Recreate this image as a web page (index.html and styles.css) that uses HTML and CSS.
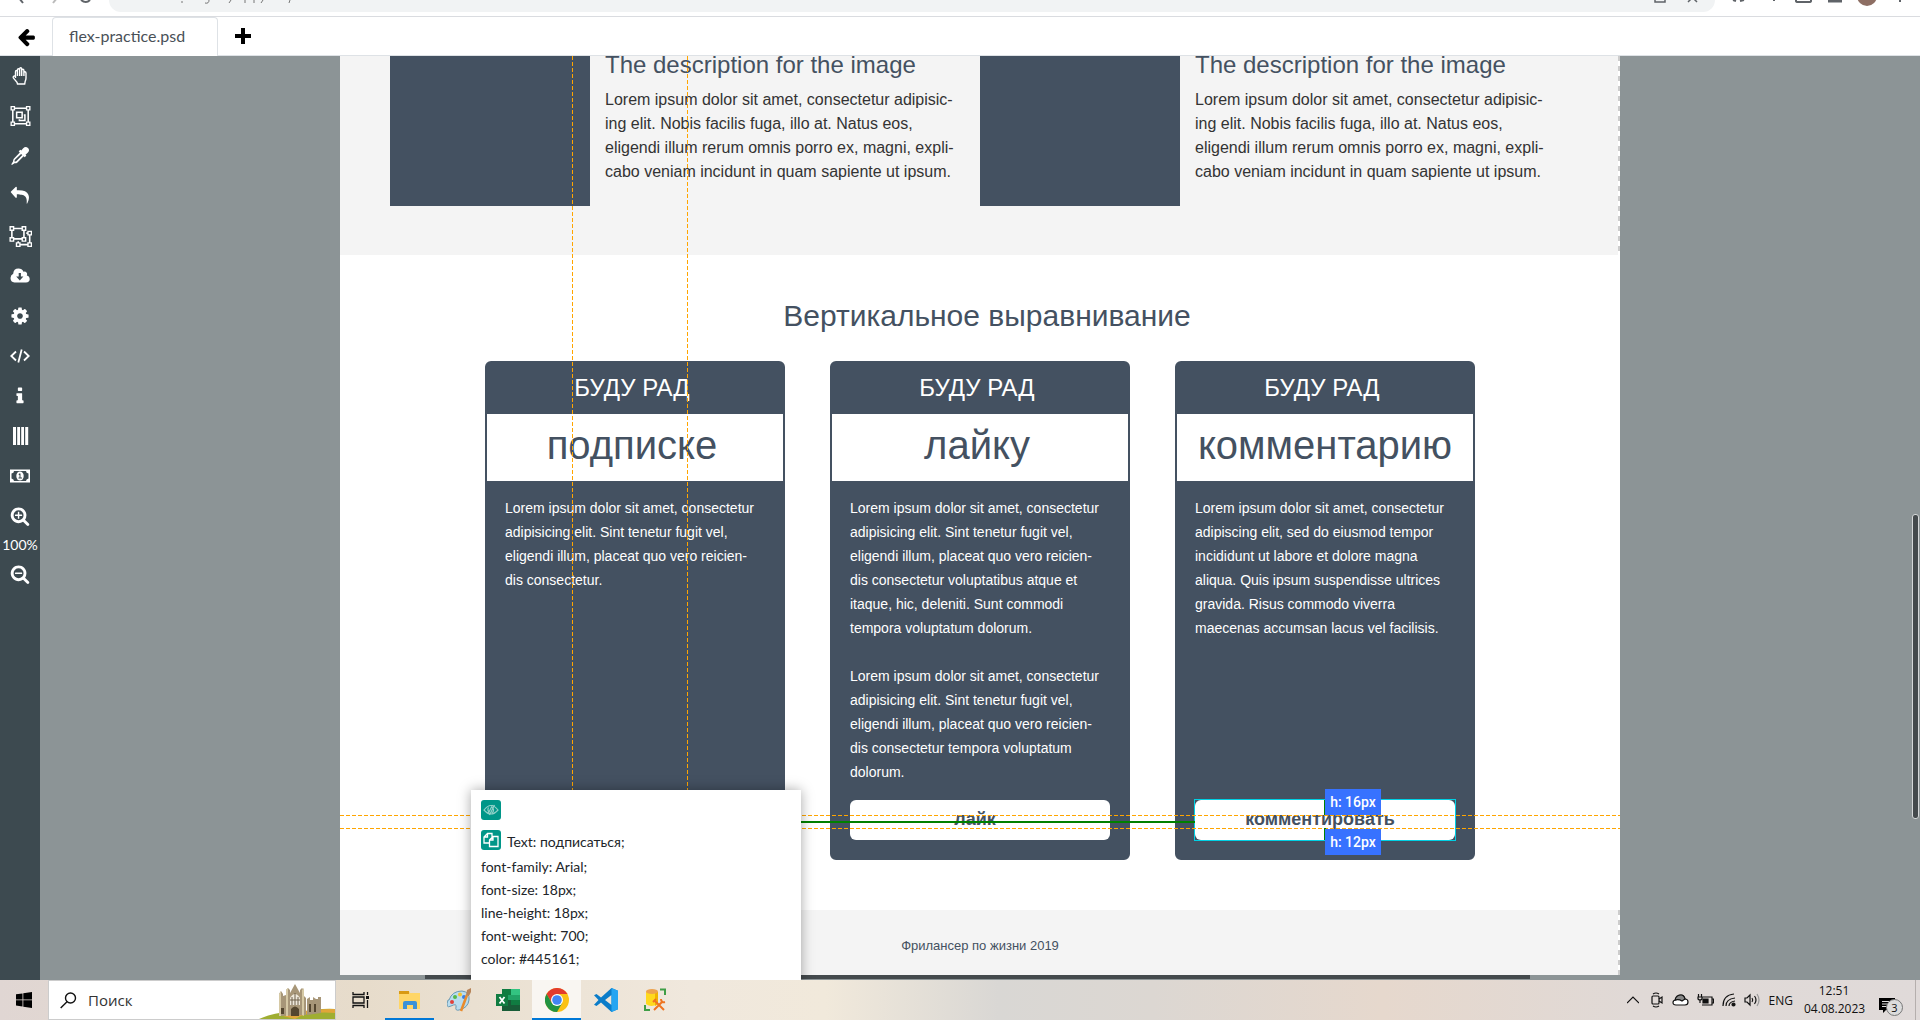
FILE: index.html
```html
<!DOCTYPE html>
<html lang="ru">
<head>
<meta charset="utf-8">
<title>flex-practice.psd</title>
<link rel="stylesheet" href="styles.css">
</head>
<body>
<header class="browser">
  <svg class="nav-icons" width="100" height="8" viewBox="0 0 100 8" fill="none" stroke="#5f6368" stroke-width="2"><path d="M19 -2l4 5"/><path d="M53 3l4-5" stroke="#bbb"/><path d="M81 0q5 4 9 0"/></svg>
  <div class="address">
    <svg width="120" height="6" viewBox="0 0 120 6" fill="none" stroke="#777"><path d="M1 1v2M28 0q0 4-4 3M50 0l-2 3M64 0v3M73 0v3M82 0l-2 3M109 0l-1 3"/></svg>
    <svg width="60" height="6" viewBox="0 0 60 6" fill="none" stroke="#5f6368"><path d="M8 -3v5h10v-5M41 2l3-3h3l3 3" stroke-width="1.5"/></svg>
  </div>
  <svg class="ext-icons" width="190" height="8" viewBox="0 0 190 8" fill="none" stroke="#5f6368" stroke-width="2"><path d="M2 0l3 1M9 1l4-1M43 0v1M65 -2v3q0 1 2 1h11q2 0 2-1v-3"/><path d="M97 1h14" stroke-width="3"/><circle cx="136" cy="-4" r="10" fill="#8d6e63" stroke="none"/><path d="M169 0v2"/></svg>
</header>
<nav class="tabs" aria-label="Файлы">
  <button class="tab-btn back" aria-label="Назад"><svg width="19" height="19" viewBox="64 100 1700 1700"><path d="M1664 896v128q0 53-32.500 90.500t-84.500 37.500h-704l293 294q38 36 38 90t-38 90l-75 76q-37 37-90 37-52 0-91-37l-651-652q-37-37-37-90 0-52 37-91l651-650q38-38 91-38 52 0 90 38l75 74q38 38 38 91t-38 91l-293 293h704q52 0 84.500 37.500t32.500 90.500z"/></svg></button>
  <a class="tab" href="#file">flex-practice.psd</a>
  <button class="tab-btn add" aria-label="Добавить"><svg width="18" height="18" viewBox="0 0 18 18"><path d="M7 1h4v6h6v4h-6v6H7v-6H1V7h6z"/></svg></button>
</nav>
<main class="workspace">
  <aside class="tools">
    <button aria-label="Рука"><svg viewBox="0 0 20 20" class="line"><path d="M5.500 12V5.800q0-1.300 1-1.300t1 1.300V4q0-1.300 1.100-1.300T9.700 4V3q0-1.300 1-1.300t1 1.300v1.500q0-1.300 1.100-1.300t1.100 1.300V7q0-1.200 1-1.200t1.100 1.200v5q0 1.600-.8 3.200l-.5 2.800H7.500l-.5-1.700-3.500-4.200q-.8-1.200.1-1.900t1.900.3zM7.500 5.500V10M9.700 4v6M11.700 4v6M13.900 6.500V10"/></svg></button>
    <button aria-label="Группа"><svg viewBox="0 0 20 20" class="line wide"><path d="M3 3h14v14H3zM6.500 6.500h5v5h-5zM13 9h1v5H9v-1"/><g class="knob"><path d="M1.500 1.500h3v3h-3zM15.500 1.500h3v3h-3zM1.500 15.500h3v3h-3zM15.500 15.500h3v3h-3z"/></g></svg></button>
    <button aria-label="Пипетка"><svg viewBox="0 0 20 20"><path d="M18 2q-2.500-2.300-4.800.3L11.300 4.500l-.9-.8-1.700 1.600 1.100 1.200-6 6.300q-.8 1-.8 2.700L1.300 18.300l.6.6L4.500 17.300q2 .1 3-.9l6.100-6.200 1.200 1.100 1.600-1.700-.9-.9 2.200-2q2.500-2.400.3-4.700zM11.100 7.900l1.200 1.100-5.800 5.900q-.7.7-2 .7 0-1.400.7-2z" fill-rule="evenodd"/></svg></button>
    <button aria-label="Отменить"><svg viewBox="0 60 1792 1792"><path d="M1700 1120q0 166-127 451-20 60-50 76-25 5-30-35 8-60 8-173 0-112-19-200t-55-154-90-112-121-79-158-51-191-32-130-9h-124v256q0 26-19 45t-45 19-45-19L90 651q-19-19-19-45t19-45L504 149q19-19 45-19t45 19 19 45v256h160q713 0 875 403 53 134 52 267z"/></svg></button>
    <button aria-label="Разгруппировать"><svg viewBox="0 0 20 19" class="line wide"><path d="M2.500 3h10.500v9H2.500zM15 7h3v10H8v-3"/><g class="knob"><path d="M1 1.500h3v3H1zM11.500 1.500h3v3h-3zM1 11h3v3H1zM11.500 11h3v3h-3zM16.500 5.500h3v3h-3zM16.500 15.500h3v3h-3zM6.500 15.500h3v3h-3z"/></g></svg></button>
    <button aria-label="Скачать"><svg viewBox="0 0 20 20"><path d="M4.500 16.500Q.5 16 .5 12q0-3 2.700-4.300Q3.500 2.500 8.500 2.500q3.500 0 5 3.300 2.500-1 3.500 1.500.4.900-.2 2.200 2.900.8 2.900 3.700 0 2.800-3.700 3.300zM8.700 7v3.500H6.200l3.600 4 3.600-4h-2.500V7z" fill-rule="evenodd"/></svg></button>
    <button aria-label="Настройки"><svg viewBox="0 0 1792 1792"><path fill-rule="evenodd" d="M1152 896q0-106-75-181t-181-75-181 75-75 181 75 181 181 75 181-75 75-181zm512-109v222q0 12-8 23t-20 13l-185 28q-19 54-39 91 35 50 107 138 10 12 10 25t-9 23q-27 37-99 108t-94 71q-12 0-26-9l-138-108q-44 23-91 38-16 136-29 186-7 28-36 28h-222q-14 0-24.500-8.500t-11.500-21.500l-28-184q-49-16-90-37l-141 107q-10 9-25 9-14 0-25-11-126-114-165-168-7-10-7-23 0-12 8-23 15-21 51-66.500t54-70.500q-27-50-41-99l-183-27q-13-2-21-12.500t-8-23.500v-222q0-12 8-23t19-13l186-28q14-46 39-92-40-57-107-138-10-12-10-24 0-10 9-23 26-36 98.500-107.500t94.500-71.500q13 0 26 10l138 107q44-23 91-38 16-136 29-186 7-28 36-28h222q14 0 24.500 8.500t11.500 21.500l28 184q49 16 90 37l142-107q9-9 24-9 13 0 25 10 129 119 165 170 7 8 7 22 0 12-8 23-15 21-51 66.500t-54 70.500q26 50 41 98l183 28q13 2 21 12.500t8 23.500z"/></svg></button>
    <button aria-label="Код"><svg viewBox="0 0 20 20" class="line"><path d="M6 5.500L1.300 10 6 14.500M14 5.500l4.700 4.500-4.700 4.500M11.700 3.500l-3.400 13" stroke-width="1.800"/></svg></button>
    <button aria-label="Информация"><svg viewBox="0 0 1792 1792"><path d="M1216 1344v128q0 26-19 45t-45 19h-512q-26 0-45-19t-19-45v-128q0-26 19-45t45-19h64v-384h-64q-26 0-45-19t-19-45v-128q0-26 19-45t45-19h384q26 0 45 19t19 45v576h64q26 0 45 19t19 45zm-128-1152v192q0 26-19 45t-45 19h-256q-26 0-45-19t-19-45v-192q0-26 19-45t45-19h256q26 0 45 19t19 45z"/></svg></button>
    <button aria-label="Сетка"><svg viewBox="0 0 20 20"><path d="M3 1h3v18H3zM7.200 1h2.800v18H7.200zM11.200 1H14v18h-2.800zM15.200 1h3v18h-3z"/></svg></button>
    <button aria-label="Поддержать"><svg viewBox="0 0 20 20"><path fill-rule="evenodd" d="M0 3.500h20v13H0zM4 5q0 2-2.500 2.500v5Q4 13 4 15h12q0-2 2.500-2.500v-5Q16 7 16 5z"/><ellipse cx="10" cy="10" rx="3.700" ry="4.600"/><path d="M9 7.500h1.500v4H12v1H8.500v-1h1V9H8.600z" fill="#3d4a50"/></svg></button>
    <button aria-label="Увеличить"><svg viewBox="0 0 1792 1792"><path fill-rule="evenodd" d="M1088 800v64q0 32-32 32h-224v224q0 32-32 32h-64q-32 0-32-32v-224h-224q-32 0-32-32v-64q0-32 32-32h224v-224q0-32 32-32h64q32 0 32 32v224h224q32 0 32 32zm128 32q0-185-131.500-316.500t-316.500-131.500-316.500 131.500-131.500 316.500 131.500 316.500 316.500 131.500 316.500-131.500 131.500-316.500zm512 832q0 53-37.500 90.500t-90.500 37.500q-54 0-90-38l-343-342q-179 124-399 124-143 0-273.500-55.500t-225-150-150-225-55.500-273.500 55.500-273.500 150-225 225-150 273.500-55.500 273.500 55.500 225 150 150 225 55.500 273.500q0 220-124 399l343 343q37 37 37 90z"/></svg></button>
    <span class="zoom">100%</span>
    <button aria-label="Уменьшить"><svg viewBox="0 0 1792 1792"><path fill-rule="evenodd" d="M1088 800v64q0 32-32 32h-576q-32 0-32-32v-64q0-32 32-32h576q32 0 32 32zm128 32q0-185-131.500-316.500t-316.500-131.500-316.500 131.500-131.500 316.500 131.500 316.500 316.500 131.500 316.500-131.500 131.500-316.500zm512 832q0 53-37.500 90.500t-90.500 37.500q-54 0-90-38l-343-342q-179 124-399 124-143 0-273.500-55.500t-225-150-150-225-55.500-273.500 55.500-273.500 150-225 225-150 273.500-55.500 273.500 55.500 225 150 150 225 55.500 273.500q0 220-124 399l343 343q37 37 37 90z"/></svg></button>
  </aside>
  <div class="viewport">
    <div class="artboard">
      <section class="descriptions dashed-edge">
        <article class="desc">
          <div class="thumb"></div>
          <div><h3>The description for the image</h3>
          <p>Lorem ipsum dolor sit amet, consectetur adipisic-<br>ing elit. Nobis facilis fuga, illo at. Natus eos,<br>eligendi illum rerum omnis porro ex, magni, expli-<br>cabo veniam incidunt in quam sapiente ut ipsum.</p></div>
        </article>
        <article class="desc">
          <div class="thumb"></div>
          <div><h3>The description for the image</h3>
          <p>Lorem ipsum dolor sit amet, consectetur adipisic-<br>ing elit. Nobis facilis fuga, illo at. Natus eos,<br>eligendi illum rerum omnis porro ex, magni, expli-<br>cabo veniam incidunt in quam sapiente ut ipsum.</p></div>
        </article>
      </section>
      <section class="vertical">
        <h2>Вертикальное выравнивание</h2>
        <div class="cards">
          <article class="card">
            <div class="card-label">БУДУ РАД</div>
            <div class="card-name">подписке</div>
            <div class="card-body"><p>Lorem ipsum dolor sit amet, consectetur<br>adipisicing elit. Sint tenetur fugit vel,<br>eligendi illum, placeat quo vero reicien-<br>dis consectetur.</p></div>
          </article>
          <article class="card">
            <div class="card-label">БУДУ РАД</div>
            <div class="card-name">лайку</div>
            <div class="card-body"><p>Lorem ipsum dolor sit amet, consectetur<br>adipisicing elit. Sint tenetur fugit vel,<br>eligendi illum, placeat quo vero reicien-<br>dis consectetur voluptatibus atque et<br>itaque, hic, deleniti. Sunt commodi<br>tempora voluptatum dolorum.</p>
            <p>Lorem ipsum dolor sit amet, consectetur<br>adipisicing elit. Sint tenetur fugit vel,<br>eligendi illum, placeat quo vero reicien-<br>dis consectetur tempora voluptatum<br>dolorum.</p>
            <button class="card-btn">лайк</button></div>
          </article>
          <article class="card">
            <div class="card-label">БУДУ РАД</div>
            <div class="card-name card-name-wide">комментарию</div>
            <div class="card-body"><p>Lorem ipsum dolor sit amet, consectetur<br>adipiscing elit, sed do eiusmod tempor<br>incididunt ut labore et dolore magna<br>aliqua. Quis ipsum suspendisse ultrices<br>gravida. Risus commodo viverra<br>maecenas accumsan lacus vel facilisis.</p>
            <button class="card-btn selected">комментировать</button></div>
          </article>
        </div>
      </section>
      <footer class="page-footer dashed-edge">Фрилансер по жизни 2019</footer>

      <div class="guide-v guide-left"></div>
      <div class="guide-v guide-right"></div>
      <div class="guide-h guide-top"></div>
      <div class="guide-h guide-bottom"></div>
      <div class="measure-h"></div>
      <div class="measure-v"></div>
      <span class="size size-above">h: 16px</span>
      <span class="size size-below">h: 12px</span>
      <div class="popup">
        <button class="chip" aria-label="Скрыть"><svg width="16" height="16" viewBox="0 0 16 16" fill="none" stroke="#8fd0c8" stroke-width="1.200"><path d="M1 8q7-9 14 0-7 8-14 0zM5.500 5.500q-1.500 3 1 5M8 5q3 1 2.500 4L9 11M11.500 3l-5 10M9.500 3l-4 8"/></svg></button>
        <div class="popup-row"><button class="chip" aria-label="Копировать"><svg width="16" height="16" viewBox="0 0 16 16" fill="none" stroke="#fff" stroke-width="1.300"><path d="M6 11H1V5l3.500-3.500H9V5M1 5h3.500V1.500M6.500 8L10 4.500h5V14.500H6.500zM6.500 8H10V4.500"/></svg></button><span>Text: подписаться;</span></div>
        <p>font-family: Arial;<br>font-size: 18px;<br>line-height: 18px;<br>font-weight: 700;<br>color: #445161;</p>
      </div>
    </div>
    <div class="scroll-y"></div>
    <div class="scroll-x"></div>
  </div>
</main>
<footer class="taskbar">
  <button class="start" aria-label="Пуск"><svg width="16" height="16" viewBox="0 0 16 16"><path d="M0 2.300l6.500-.9v6H0zM7.300 1.300L16 0v7.400H7.300zM0 8.300h6.500v6.200L0 13.600zM7.300 8.300H16V16l-8.700-1.200z"/></svg></button>
  <label class="search">
    <svg width="17" height="17" viewBox="0 0 17 17" fill="none" stroke="#111" stroke-width="1.400"><circle cx="10.500" cy="6" r="5"/><path d="M7 9.700L.7 16"/></svg>
    <input type="text" value="Поиск" aria-label="Поиск">
    <svg class="castle" width="76" height="38" viewBox="0 0 76 38"><path d="M0 38q20-9 40-6 20-5 36-4v10z" fill="#9fae32"/><path d="M24 35q25-8 52-7v4q-28-2-40 6z" fill="#e0a63a"/><path d="M20 35V13l2-3 2 3v2l3-1V9l2-2 2 2v3l5-9 5 9V9l2-2 2 2v6l2 2v17zM48 34V18l3-2v3h3v-3l3 2h2v-2h3v16z" fill="#a79678"/><path d="M20 35V13l2-3v25zM27 35V9l2-2v28zM43 34V9l2-2v28z" fill="#d6c9a5"/><path d="M31 24v-7q5-8 10 0v7z" fill="#eee8db"/><path d="M33 24v-8M36 24V12M39 24v-8M31 19h10" stroke="#6e604a"/><path d="M32 35v-7q4-5 8 0v7zM22 33v-6h3v6zM50 31v-8h2v8zM55 31v-8h2v8z" fill="#54462f"/></svg>
  </label>
  <div class="apps">
    <button class="app" aria-label="Представление задач"><svg width="18" height="16" viewBox="0 0 18 16" fill="none" stroke="#111" stroke-width="1.300"><path d="M1 0v2.500h11V0M1 5h11v6H1zM1 16v-2.500h11V16M15.500 0v3M15.500 8v8"/><path d="M14 4h3v3h-3z" fill="#111" stroke="none"/></svg></button>
    <button class="app open" aria-label="Проводник"><svg width="22" height="20" viewBox="0 0 22 20"><path d="M0 1h10l1 2h10v16H0z" fill="#ffd667"/><path d="M0 1h10v3H0z" fill="#d99a12"/><path d="M4 19v-6q0-2 2-2h10q2 0 2 2v6h-4v-4H8v4z" fill="#3a92d8"/></svg></button>
    <button class="app" aria-label="Paint"><svg width="24" height="24" viewBox="0 0 24 24"><path d="M2 12Q5 3 15 3q8 1 7 9-1 8-10 10-4 1-3-3t-5-1-3-6z" fill="#b9dcee" stroke="#6a9ab3"/><circle cx="8" cy="9" r="2" fill="#54b948"/><circle cx="13" cy="6.500" r="2" fill="#f6c431"/><circle cx="5" cy="14" r="2" fill="#e2403a"/><circle cx="17" cy="9" r="2" fill="#3c7ee0"/><path d="M14 23l6-16" stroke="#e98b2c" stroke-width="2.500"/><path d="M19 7l1-5 4-2v4l-2 4z" fill="#b78459"/></svg></button>
    <button class="app" aria-label="Excel"><svg width="24" height="22" viewBox="0 0 24 22"><path d="M6 0h18v22H6z" fill="#21a366"/><path d="M6 0h9v6H6z" fill="#107c41"/><path d="M15 0h9v6h-9z" fill="#33c481"/><path d="M6 11h9v5H6z" fill="#185c37"/><path d="M15 11h9v5h-9z" fill="#107c41"/><path d="M6 16h18v6H6z" fill="#185c37"/><path d="M0 5h12v12H0z" fill="#107c41"/><path d="M3.500 8l5 6.500M8.500 8l-5 6.500" stroke="#fff" stroke-width="1.800"/></svg></button>
    <button class="app open active" aria-label="Chrome"><svg width="24" height="24" viewBox="0 0 24 24"><circle cx="12" cy="12" r="12" fill="#fbc116"/><path d="M1.600 6A12 12 0 0 1 22.400 6H12L6.800 15z" fill="#e33b2e"/><path d="M1.600 6L6.800 15 12 18l5.200-3L12 24A12 12 0 0 1 1.600 6z" fill="#229342"/><circle cx="12" cy="12" r="6" fill="#fff"/><circle cx="12" cy="12" r="4.800" fill="#4285f4"/></svg></button>
    <button class="app" aria-label="VS Code"><svg width="24" height="24" viewBox="0 0 24 24"><path d="M17.500 0L7 9.500 2.500 6 0 7.300 4.500 12 0 16.700 2.500 18 7 14.500 17.500 24l6.500-2.800V2.800zM17.500 7v10L11 12z" fill="#0a7cc9" fill-rule="evenodd"/><path d="M17.500 0L24 2.800v18.400L17.500 24z" fill="#25a5f2"/></svg></button>
    <button class="app" aria-label="База данных"><svg width="24" height="24" viewBox="0 0 24 24"><path d="M3 4v12q5 4 12 0V4z" fill="#ffd91e"/><path d="M12 4h3v12l-3 2z" fill="#f0b400"/><ellipse cx="9" cy="3.500" rx="6" ry="2.500" fill="#eda34e"/><path d="M17 1.500h5V7M2 17v5h5" fill="none" stroke="#3f9e46" stroke-width="2"/><path d="M12 13l9 9M20 13l-9 9M10 14l3-3M18 11q0 4 4 3" stroke="#ef7420" stroke-width="2" fill="none"/></svg></button>
  </div>
  <div class="tray">
    <svg width="12" height="8" viewBox="0 0 12 8" class="t"><path d="M0 7l6-6 6 6"/></svg>
    <svg width="13" height="16" viewBox="0 0 13 16" class="t"><rect x="1" y="4" width="7" height="8" rx="1"/><path d="M8 7l3-2v6L8 9M2 2q3-2 6 0M2 14q3 2 6 0"/></svg>
    <svg width="17" height="12" viewBox="0 0 17 12" class="t"><path d="M4 11Q1 11 1 8.500T4 6q1-5 5-5 3 0 4 4 3 0 3 3t-3 3z" fill="#fff"/><path d="M3 6q1-5 6-5 3 0 4 4l-3 2Q7 5 3 6z" fill="#888"/></svg>
    <svg width="17" height="14" viewBox="0 0 17 14" class="t"><path d="M5 4h10v8H5M15 6h1.500v4H15M1.500 1v3M4.500 1v3M1 4h4v2q-2 2-4 0zM3 7v3"/><path d="M6 6h5v4H6z" fill="#111"/></svg>
    <svg width="14" height="14" viewBox="0 0 14 14" class="t"><path d="M1 13Q1 2 12 1M4 13q0-7 9-8M7 13q0-4 6-5"/><circle cx="11.500" cy="11.500" r="1.500" fill="#111"/></svg>
    <svg width="17" height="14" viewBox="0 0 17 14" class="t"><path d="M1 5h2l3-3v10L3 9H1zM8 5q1.500 2 0 4M10.500 3q3 4 0 8"/><path d="M13 1q4 6 0 12" stroke="#999"/></svg>
    <span class="lang">ENG</span>
    <time class="clock">12:51<br>04.08.2023</time>
    <button class="notify" aria-label="Уведомления"><svg width="16" height="16" viewBox="0 0 16 16"><path d="M0 0h16v12H7l-3 3v-3H0z"/><path d="M3 3.500h10M3 6h10M3 8.500h6" stroke="#ddd" stroke-width="1.200"/></svg><span class="badge">3</span></button>
  </div>
</footer>
</body>
</html>
```
FILE: styles.css
```css
* { box-sizing: border-box; }
body {
  margin: 0;
  height: 100vh;
  display: flex;
  flex-direction: column;
  overflow: hidden;
  background: #fff;
  color: #212529;
  font-family: Lato, "Open Sans", sans-serif;
}
h2, h3, p { margin: 0; font-weight: 400; }
button { padding: 0; border: 0; background: none; font: inherit; color: inherit; }
svg { display: block; flex: none; }

/* Browser chrome */
.browser {
  flex: none;
  display: flex;
  align-items: flex-start;
  height: 17px;
  padding-right: 14px;
  border-bottom: 1px solid #dadce0;
}
.nav-icons { margin-right: 9px; }
.address {
  flex: 1;
  display: flex;
  justify-content: space-between;
  height: 12px;
  padding: 0 8px 0 72px;
  border-radius: 0 0 14px 14px;
  background: #f1f3f4;
}
.ext-icons { margin-left: 16px; margin-right: -15px; }

/* File tabs */
.tabs {
  flex: none;
  display: flex;
  height: 39px;
  border-bottom: 1px solid #dee2e6;
}
.tab-btn { display: flex; align-items: center; }
.back { width: 52px; padding: 2px 0 0 17px; }
.add { padding-left: 16px; }
.tab {
  width: 166px;
  height: 39px;
  padding-left: 16px;
  border: 1px solid #dee2e6;
  border-bottom: 0;
  border-radius: 4px 4px 0 0;
  background: #fff;
  color: #495057;
  font-size: 16px;
  line-height: 36px;
  text-decoration: none;
}

/* Workspace */
.workspace { flex: 1; min-height: 0; display: flex; }
.tools {
  width: 40px;
  display: flex;
  flex-direction: column;
  align-items: center;
  background: #3d4a50;
  color: #fff;
}
.tools button { width: 40px; height: 40px; display: flex; align-items: center; justify-content: center; }
.tools svg { width: 20px; height: 20px; fill: #fff; }
.tools .line { fill: none; stroke: #fff; stroke-width: 1.4; }
.tools .wide { width: 23px; height: 22px; }
.tools .knob { fill: #3d4a50; stroke: #fff; stroke-width: 1.2; }
.zoom { font-size: 14px; line-height: 18px; }
.viewport { position: relative; flex: 1; overflow: hidden; background: #8c9496; }
.artboard {
  position: relative;
  width: min(1280px, 100%);
  margin: 0 auto;
  background: #fff;
  color: #445161;
  font-family: "Liberation Sans", Arial, sans-serif;
}
.dashed-edge { position: relative; background: #f4f4f4; }
.dashed-edge::after {
  content: "";
  position: absolute;
  top: 0;
  right: 0;
  bottom: 0;
  width: 2px;
  background: repeating-linear-gradient(#ccc 0 5px, #fff 5px 10px);
}
.descriptions { display: grid; grid-template-columns: 1fr 1fr; padding: 0 50px 49px; }
.desc { display: flex; gap: 15px; white-space: nowrap; }
.thumb { width: 200px; height: 150px; background: #445161; }
.desc h3 { font-size: 24px; line-height: 18px; margin-bottom: 14px; }
.desc p { color: #333; font-size: 16px; line-height: 24px; }

.vertical { padding: 41px 145px 50px; }
.vertical h2 { padding-left: 14px; margin-bottom: 25px; font-size: 30px; line-height: 40px; text-align: center; }
.cards { display: grid; grid-template-columns: repeat(3, 1fr); gap: 45px; }
.card {
  display: flex;
  flex-direction: column;
  border: 2px solid #445161;
  border-radius: 6px;
  background: #445161;
  color: #fff;
}
.card-label { padding: 0 6px 2px 0; font-size: 24px; line-height: 49px; text-align: center; }
.card-name { padding: 0 6px 4px 0; background: #fff; color: #445161; font-size: 40px; line-height: 63px; text-align: center; }
.card-name-wide { padding-right: 0; }
.card-body { flex: 1; display: flex; flex-direction: column; padding: 15px 18px 18px; font-size: 14px; line-height: 24px; white-space: nowrap; }
.card-body p + p { margin-top: 24px; }
.card-body p:last-of-type { margin-bottom: 16px; }
.card-btn {
  position: relative;
  flex: none;
  height: 40px;
  margin-top: auto;
  padding: 0 10px 2px 0;
  border-radius: 6px;
  background: #fff;
  color: #445161;
  font-size: 18px;
  font-weight: 700;
}
.selected::after { content: ""; position: absolute; inset: -1px; border: 1px solid #00d0e4; }
.page-footer { padding-top: 7px; font-size: 13px; line-height: 58px; text-align: center; }

/* Guides and measurements drawn over the artboard */
.guide-v, .guide-h, .measure-h, .measure-v, .size, .popup { position: absolute; }
.guide-v { top: 0; width: 1px; height: 734px; background: repeating-linear-gradient(#ffa500 0 4px, transparent 4px 6px); }
.guide-left { left: 232px; }
.guide-right { left: 347px; }
.guide-h { left: 0; right: 0; height: 1px; background: repeating-linear-gradient(90deg, #ffa500 0 4px, transparent 4px 6px); }
.guide-top { top: 759px; }
.guide-bottom { top: 772px; }
.measure-h { left: 461px; top: 765px; width: 394px; height: 2px; background: #008000; }
.measure-v { left: 984px; top: 744px; width: 2px; height: 40px; background: linear-gradient(#008000 0 15px, transparent 15px 28px, #008000 28px); }
.size {
  left: 985px;
  width: 56px;
  background: #3772ff;
  color: #fff;
  font-family: Roboto, sans-serif;
  font-size: 14px;
  font-weight: 500;
  line-height: 26px;
  text-align: center;
}
.size-above { top: 733px; }
.size-below { top: 773px; }
.popup {
  z-index: 2;
  left: 131px;
  top: 734px;
  width: 330px;
  height: 200px;
  padding: 10px;
  background: #fff;
  box-shadow: 0 0 12px rgba(0, 0, 0, .35);
  color: #212529;
  font-family: Lato, "Open Sans", sans-serif;
  font-size: 14px;
  line-height: 23px;
}
.chip { display: flex; align-items: center; justify-content: center; width: 20px; height: 20px; border-radius: 3px; background: #009688; }
.popup-row { display: flex; gap: 6px; height: 20px; margin: 10px 0 5px; }

.scroll-x, .scroll-y { position: absolute; }
.scroll-x { left: 0; right: 0; bottom: 0; height: 5px; background: linear-gradient(#444a4d, #444a4d) 385px 0 / 1105px 4px no-repeat #8c9496; }
.scroll-y { right: 1px; top: 458px; width: 7px; height: 305px; border: 1px solid #d5d8d9; border-radius: 3px; background: #444a4d; }

/* Taskbar */
.taskbar {
  flex: none;
  height: 40px;
  display: flex;
  background: linear-gradient(90deg, #e0d6d3, #e7dccb 19%, #f0e8dd 36%, #f1e9db 43%, #d9d7d4 52%, #dcd7d2 60%, #e6d8cd 72%, #e0d9d6 85%, #e0dad9);
  color: #111;
  font-family: "Open Sans", "Noto Sans", sans-serif;
  font-size: 12px;
}
.start { width: 48px; display: flex; align-items: center; justify-content: center; }
.search {
  width: 288px;
  display: flex;
  align-items: center;
  padding-left: 11px;
  border: 1px solid #ccc;
  background: #fff;
}
.search input { flex: 1; min-width: 0; margin: 0; padding: 0 0 0 11px; border: 0; background: none; color: #333; font: 15px "Open Sans", "Noto Sans", sans-serif; }
.apps { display: flex; }
.app { width: 49px; display: flex; align-items: center; justify-content: center; border-bottom: 2px solid transparent; border-top: 2px solid transparent; }
.open { border-bottom-color: #0078d7; }
.active { background: #f9f6f2; }
.tray { flex: 1; display: flex; align-items: center; justify-content: flex-end; gap: 8px; padding-right: 4px; }
.t { fill: none; stroke: #111; stroke-width: 1.2; }
.tray .t:first-child { margin-right: 4px; }
.clock { width: 60px; margin: 0 1px 0 3px; line-height: 18px; text-align: center; white-space: nowrap; }
.notify { position: relative; width: 43px; height: 40px; padding: 12px 0 0 6px; border-right: 1px solid #b5afad; }
.badge {
  position: absolute;
  left: 13px;
  top: 19px;
  width: 17px;
  height: 17px;
  border: 1px solid #777;
  border-radius: 50%;
  background: #dcdcdc;
  font-size: 11px;
  line-height: 15px;
  text-align: center;
}
```
